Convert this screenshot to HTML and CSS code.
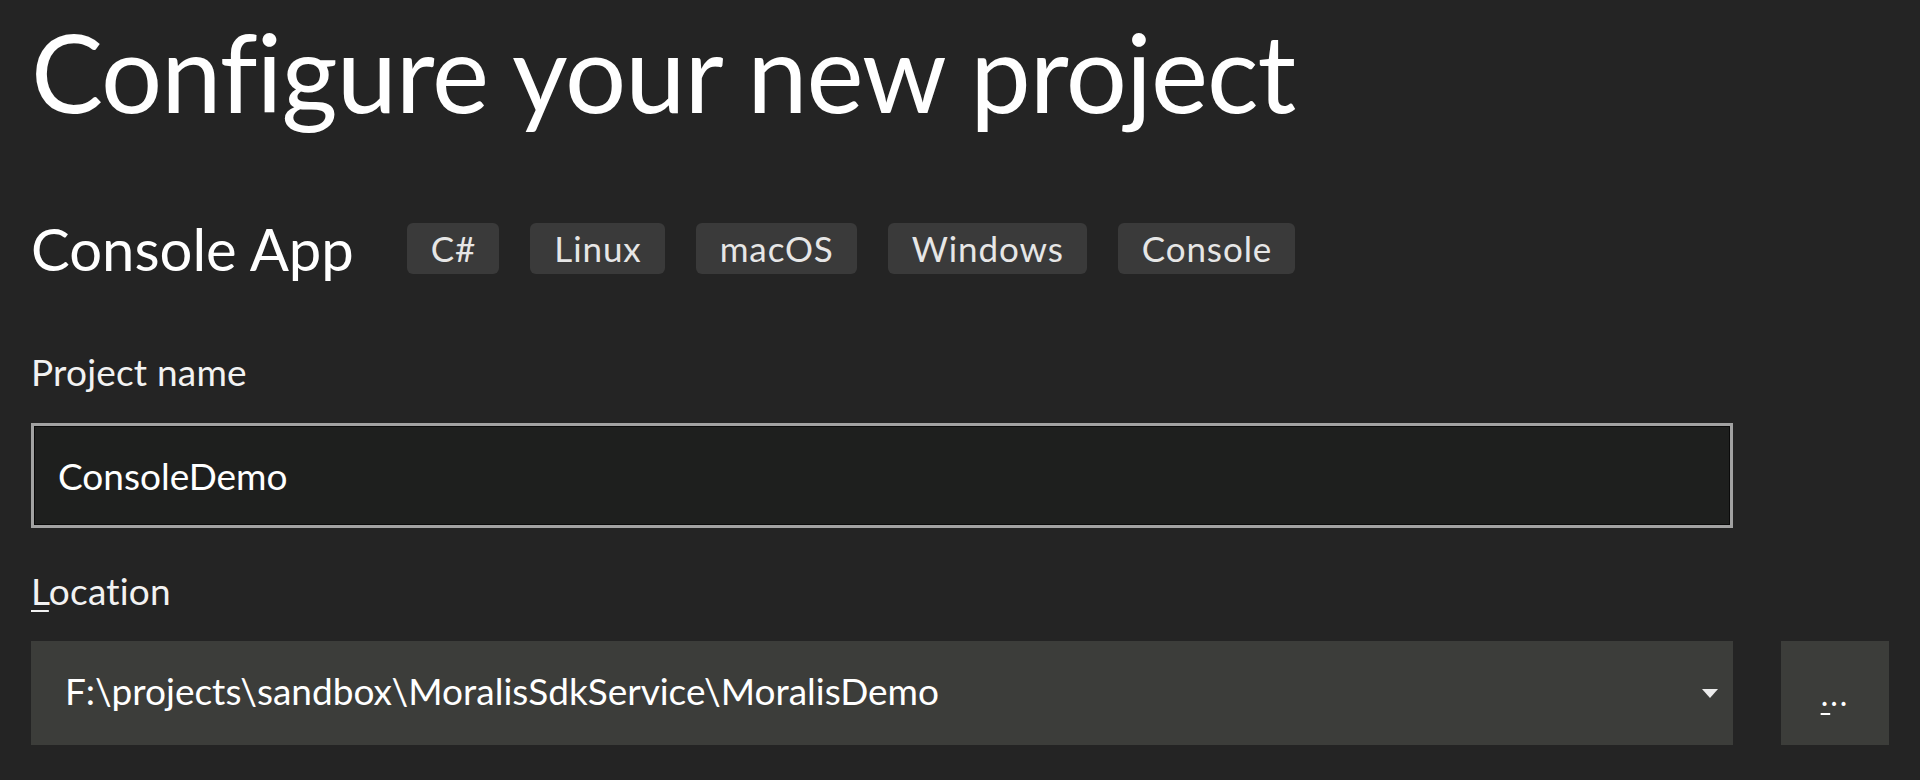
FILE: index.html
```html
<!DOCTYPE html>
<html lang="en">
<head>
<meta charset="utf-8">
<title>Configure your new project</title>
<link rel="stylesheet" href="styles.css">
</head>
<body>
<div class="page">
  <h1 class="title">Configure your new project</h1>
  <div class="template-row">
    <span class="template-name">Console App</span>
    <ul class="tags">
      <li class="tag">C#</li>
      <li class="tag">Linux</li>
      <li class="tag">macOS</li>
      <li class="tag">Windows</li>
      <li class="tag">Console</li>
    </ul>
  </div>
  <div class="field field-first">
    <label class="field-label">Project name</label>
    <div class="text-input">ConsoleDemo</div>
  </div>
  <div class="field field-second">
    <label class="field-label"><u>L</u>ocation</label>
    <div class="location-row">
      <div class="combo">
        <span class="combo-text">F:\projects\sandbox\MoralisSdkService\MoralisDemo</span>
        <svg class="combo-arrow" width="16" height="9" viewBox="0 0 16 9"><path d="M0 0 H16 L8 9 Z" fill="#ececec"/></svg>
      </div>
      <button class="browse"><u>.</u>..</button>
    </div>
  </div>
</div>
</body>
</html>
```
FILE: styles.css
```css
html, body {
  margin: 0;
  padding: 0;
  background: #242424;
  height: 100%;
  overflow: hidden;
}
body {
  font-family: Lato, "Open Sans", sans-serif;
  color: #ffffff;
}
.page {
  padding: 5px 0 0 31px;
}
.title {
  margin: 0;
  font-weight: 400;
  font-size: 108px;
  line-height: 132px;
  letter-spacing: -1px;
  color: #ffffff;
}
.template-row {
  margin-top: 86px;
  display: flex;
  align-items: center;
  height: 51px;
}
.template-name {
  font-size: 58px;
  line-height: 51px;
  color: #ffffff;
}
.tags {
  list-style: none;
  margin: 0 0 0 53px;
  padding: 0;
  display: flex;
  gap: 31px;
}
.tag {
  height: 51px;
  padding: 0 23px 0 24px;
  background: #3a3a3a;
  border-radius: 6px;
  font-size: 35px;
  letter-spacing: 0.9px;
  line-height: 51px;
  color: #e6e6e6;
}
.field-label {
  display: block;
  font-size: 37px;
  letter-spacing: 0.2px;
  line-height: 42px;
  color: #f2f2f2;
}
.field-first .field-label {
  margin-top: 77px;
}
.field-second .field-label {
  margin-top: 42px;
}
.field-label u {
  text-decoration-thickness: 2px;
  text-underline-offset: 5px;
}
.text-input {
  margin-top: 30px;
  box-sizing: border-box;
  width: 1702px;
  height: 105px;
  border: 3px solid #a2a2a2;
  box-shadow: inset 0 0 0 1px #0a0a0a;
  background: #1e1f1e;
  padding-left: 24px;
  display: flex;
  align-items: center;
  font-size: 37px;
  color: #ffffff;
}
.location-row {
  margin-top: 29px;
  display: flex;
  gap: 48px;
}
.combo {
  box-sizing: border-box;
  width: 1702px;
  height: 104px;
  background: #3c3d3a;
  padding: 0 15px 6px 34px;
  display: flex;
  align-items: center;
  justify-content: space-between;
  font-size: 37px;
  color: #ffffff;
}
.combo-arrow {
  margin-top: 6px;
}
.browse {
  box-sizing: border-box;
  width: 108px;
  height: 104px;
  background: #3c3d3a;
  border: none;
  padding: 0;
  font-family: Lato, "Open Sans", sans-serif;
  font-size: 32px;
  color: #ffffff;
  letter-spacing: 2px;
}
.browse u {
  text-decoration-thickness: 2px;
  text-underline-offset: 7px;
}
```
